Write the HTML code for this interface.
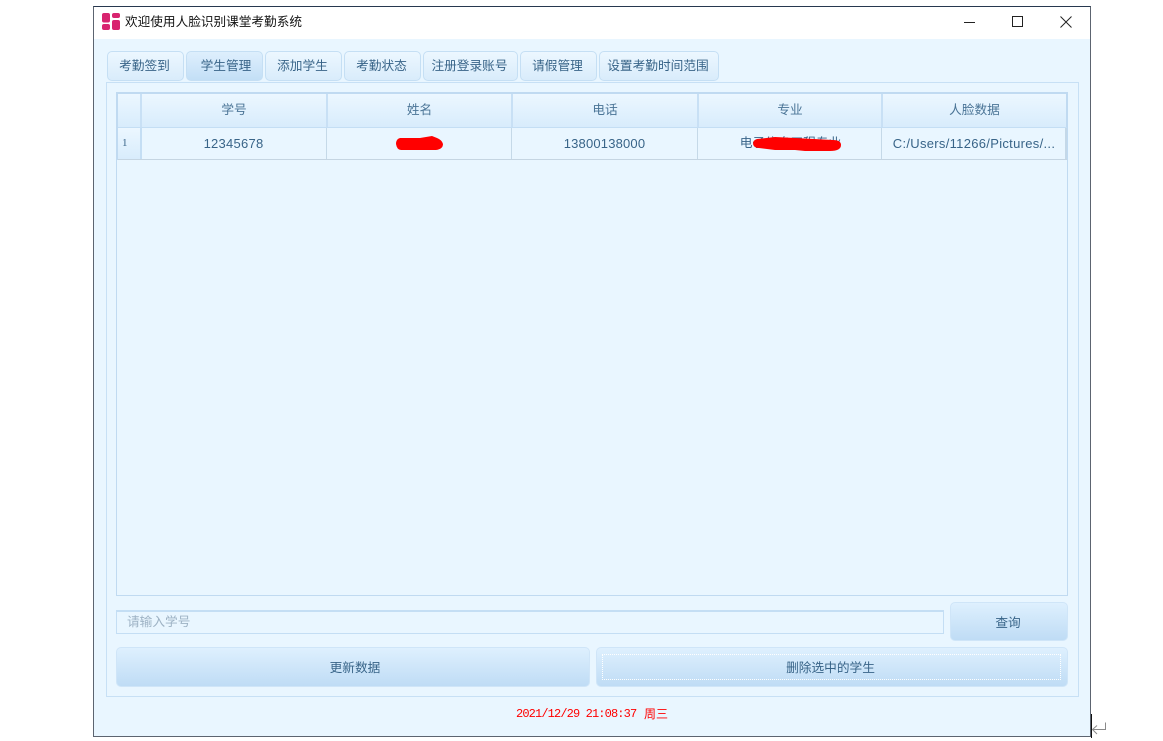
<!DOCTYPE html>
<html><head><meta charset="utf-8">
<style>
*{box-sizing:border-box;margin:0;padding:0}
html,body{width:1163px;height:741px;overflow:hidden;background:#fff;font-family:"Liberation Sans","Noto Sans CJK SC",sans-serif}
.a{position:absolute}
.tab{position:absolute;top:51px;height:30px;border:1px solid #c5dff4;border-radius:5px;background:linear-gradient(#ecf7ff,#d9ecfb);color:#386488;font-size:12.7px;line-height:29px;text-align:center;white-space:nowrap;padding-right:2px}
.btn{position:absolute;border:1px solid #cfe5f8;border-radius:5px;background:linear-gradient(#def0fe,#bfdcf5);color:#386488;font-size:12.7px;text-align:center}
.hd{position:absolute;top:94px;height:33px;background:linear-gradient(#ecf7ff,#d8ecfc);border-right:2px solid #c8e0f5;font-size:12.7px;line-height:33px;color:#4a7496;text-align:center}
.cell{position:absolute;top:128px;height:31px;border-right:1px solid #c5d9e8;font-size:13px;line-height:31px;color:#386488;text-align:center;white-space:nowrap}
</style></head><body>
<div class="a" style="left:93px;top:6px;width:998px;height:731px;background:#e9f6ff;border:1px solid #5c6470;border-top-color:#27384f"></div>
<div class="a" style="left:94px;top:7px;width:996px;height:32px;background:#fff"></div>
<svg class="a" style="left:102px;top:13px" width="18" height="18" viewBox="0 0 18 18"><g fill="#d8246f"><rect x="0" y="0" width="8" height="9.500" rx="2"/><rect x="0" y="11" width="8" height="6" rx="2"/><rect x="10" y="0" width="8" height="5" rx="2"/><rect x="10" y="7" width="8" height="10" rx="2"/></g></svg>
<div class="a" style="left:125px;top:14px;font-size:12.65px;line-height:17px;color:#111;white-space:nowrap">欢迎使用人脸识别课堂考勤系统</div>
<div class="a" style="left:964px;top:22px;width:11px;height:1px;background:#222"></div>
<div class="a" style="left:1012px;top:16px;width:11px;height:11px;border:1px solid #222"></div>
<svg class="a" style="left:1060px;top:16px" width="12" height="12" viewBox="0 0 12 12"><path d="M.5.5l11 11M11.500.5l-11 11" stroke="#222" fill="none"/></svg>

<div class="tab" style="left:107px;width:77px">考勤签到</div>
<div class="tab" style="left:186px;width:77px;padding:0 0 0 3px;background:linear-gradient(#deeffd,#c3dff6)">学生管理</div>
<div class="tab" style="left:265px;width:77px">添加学生</div>
<div class="tab" style="left:344px;width:77px">考勤状态</div>
<div class="tab" style="left:423px;width:95px">注册登录账号</div>
<div class="tab" style="left:520px;width:77px">请假管理</div>
<div class="tab" style="left:599px;width:120px">设置考勤时间范围</div>

<div class="a" style="left:106px;top:82px;width:973px;height:615px;border:1px solid #c7e0f5"></div>
<div class="a" style="left:116px;top:92px;width:952px;height:504px;border:1px solid #c0daf1;border-top:2px solid #c0daf1"></div>
<div class="a" style="left:117px;top:93px;width:1px;height:67px;background:#c0daf1"></div>
<div class="a" style="left:1066px;top:93px;width:1px;height:67px;background:#c0daf1"></div>

<div class="hd" style="left:118px;width:24px"></div>
<div class="hd" style="left:142px;width:186px">学号</div>
<div class="hd" style="left:328px;width:185px">姓名</div>
<div class="hd" style="left:513px;width:186px">电话</div>
<div class="hd" style="left:699px;width:184px">专业</div>
<div class="hd" style="left:883px;width:183px;border-right:0">人脸数据</div>
<div class="a" style="left:118px;top:127px;width:949px;height:1px;background:#c4def4"></div>

<div class="cell" style="left:118px;width:24px;background:linear-gradient(#ecf7ff,#d8ecfc);border-right:2px solid #c4def4;text-align:left;padding-left:4px;font-size:11px;font-family:'Liberation Serif',serif">1</div>
<div class="cell" style="left:142px;width:185px;letter-spacing:.25px;padding-right:1px">12345678</div>
<div class="cell" style="left:327px;width:185px"></div>
<div class="cell" style="left:512px;width:186px;letter-spacing:.18px">13800138000</div>
<div class="cell" style="left:698px;width:184px;font-size:12.7px;padding-left:2px">电子信息工程专业</div>
<div class="cell" style="left:882px;width:185px;border-right:2px solid #c4d8e8;letter-spacing:.3px;padding-left:1px">C:/Users/11266/Pictures/...</div>
<div class="a" style="left:118px;top:159px;width:949px;height:1px;background:#c5d5e2"></div>

<svg class="a" style="left:390px;top:130px" width="60" height="26" viewBox="0 0 60 26"><path d="M10 8Q6 9 6 14 7 20 11 20L46 20Q53 19 53 14 52 10 47 8L42 6 30 8Z" fill="#f00"/></svg>
<svg class="a" style="left:745px;top:133px" width="100" height="22" viewBox="0 0 100 22"><path d="M12 6Q8 7 8 11 9 15 14 15L30 17 50 17 60 18 85 18Q96 18 96 12 96 7 88 7L50 5 30 4Z" fill="#f00"/></svg>

<div class="a" style="left:116px;top:610px;width:828px;height:24px;border:1px solid #c4def4;border-top-width:2px;color:#9db2c4;font-size:12.7px;line-height:20px;padding-left:10px">请输入学号</div>
<div class="btn" style="left:950px;top:602px;width:118px;height:39px;line-height:40px;padding-right:2px">查询</div>
<div class="btn" style="left:116px;top:647px;width:474px;height:40px;line-height:41px;padding-left:4px">更新数据</div>
<div class="btn" style="left:596px;top:647px;width:472px;height:40px;line-height:41px;padding-right:3px">删除选中的学生</div>
<div class="a" style="left:602px;top:654px;width:459px;height:26px;border:1px dotted #fff"></div>

<div class="a" style="left:516px;top:706px;color:#f00;font-size:12px;line-height:16px;font-family:'Liberation Mono','Noto Sans CJK SC',monospace;white-space:nowrap;letter-spacing:-.87px;width:126px">2021/12/29 21:08:37</div>
<div class="a" style="left:644px;top:706px;color:#f00;font-size:12px;line-height:16px;white-space:nowrap">周三</div>

<div class="a" style="left:1091px;top:714px;width:1px;height:24px;background:#111"></div>
<svg class="a" style="left:1091px;top:722px" width="16" height="14" viewBox="0 0 16 14"><path d="M14.500 .5V7.500H2M6 3.500L1.500 7.500 6 12" stroke="#8a8a8a" fill="none"/></svg>
</body></html>
